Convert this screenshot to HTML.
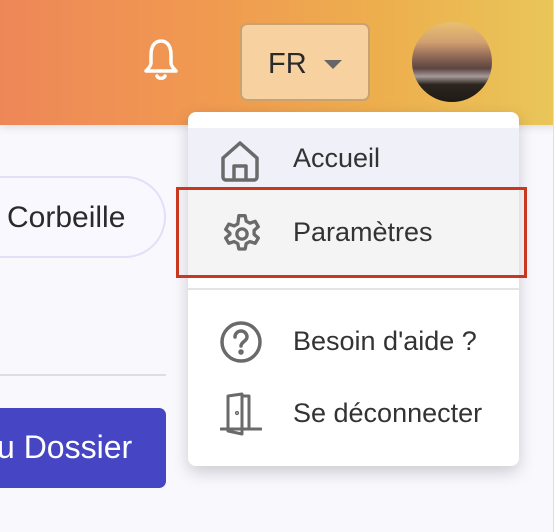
<!DOCTYPE html>
<html><head><meta charset="utf-8"><style>
*{margin:0;padding:0;box-sizing:border-box}
body{width:556px;height:532px;overflow:hidden;background:#F8F8FD;font-family:"Liberation Sans",sans-serif;position:relative}
.hdr{position:absolute;left:0;top:0;width:556px;height:125px;background:linear-gradient(90deg,#EE8758 0%,#F09B50 40%,#EDB04E 70%,#E9C65A 100%);box-shadow:0 2px 8px rgba(0,0,0,.12)}
.fr{position:absolute;left:240px;top:23px;width:130px;height:78px;background:#F7D1A0;border:2px solid #C9A272;border-radius:7px;font-size:29px;color:#2a2a2a;padding:23px 0 0 26px}
.tri{position:absolute;left:82px;top:35px;border-left:9px solid transparent;border-right:9px solid transparent;border-top:9px solid #666}
.av{position:absolute;left:412px;top:22px;width:80px;height:80px;border-radius:50%;overflow:hidden;background:linear-gradient(180deg,#E9C070 0%,#D2A070 25%,#8a6455 45%,#5a4540 58%,#a59a98 68%,#2d2620 78%,#1d1a16 100%)}
.pill{position:absolute;left:-40px;top:176px;width:206px;height:82px;border:2px solid #E2DFF8;border-radius:41px;font-size:30px;color:#2a2a2a;padding:23px 0 0 45px;background:#F8F8FE;white-space:nowrap}
.line{position:absolute;left:0;top:374px;width:166px;height:2px;background:#DDDDE2}
.btn{position:absolute;left:-20px;top:408px;width:186px;height:80px;background:#4646C4;border-radius:7px;color:#fff;font-size:32px;padding:21px 0 0 17px;white-space:nowrap}
.dd{position:absolute;left:188px;top:112px;width:331px;height:354px;background:#fff;border-radius:8px;box-shadow:0 6px 16px rgba(0,0,0,.18)}
.it{position:absolute;left:0;width:331px;font-size:27px;color:#333}
.it span{position:absolute;left:105px;white-space:nowrap}
.it svg{position:absolute;left:32px}
.red{position:absolute;left:176px;top:187px;width:351px;height:91px;border:3px solid #C8381E}
.side{position:absolute;left:553px;top:0;width:3px;height:532px;background:#fff;border-left:1px solid #ddd}
</style></head><body>
<div class="hdr">
<svg style="position:absolute;left:144px;top:38px" width="34" height="46" viewBox="0 0 34 46" fill="none" stroke="#fff" stroke-width="3.5" stroke-linejoin="round" stroke-linecap="round"><path d="M17 3C9 3 7 11 7 17v8c0 3-3 6-5 8h30c-2-2-5-5-5-8v-8c0-6-2-14-10-14z"/><path d="M13 38c1 3 7 3 8 0"/></svg>
<div class="fr">FR<div class="tri"></div></div>
<div class="av"></div>
</div>
<div class="side"></div>
<div class="pill">Corbeille</div>
<div class="line"></div>
<div class="btn">u Dossier</div>
<div class="dd">
<div class="it" style="top:16px;height:60px;background:#F0F0F8"><svg style="top:12px" width="40" height="42" viewBox="0 0 40 42" fill="none" stroke="#6a6a6a" stroke-width="3.5" stroke-linejoin="round"><path d="M3 18L20 3l17 15v19a3 3 0 01-3 3H6a3 3 0 01-3-3z"/><path d="M14 40V26h12v14"/></svg><span style="top:15px">Accueil</span></div>
<div class="it" style="top:78px;height:86px;background:#F4F4F4"><svg style="top:20px" width="44" height="48" viewBox="0 0 24 24" fill="none" stroke="#6a6a6a" stroke-width="1.8" stroke-linejoin="round"><path d="M10.3 1.5h3.4l.6 3 2 1.1 2.9-1 1.7 2.9-2.3 2v2.2l2.3 2-1.7 2.9-2.9-1-2 1.1-.6 3h-3.4l-.6-3-2-1.1-2.9 1-1.7-2.9 2.3-2V11l-2.3-2 1.7-2.9 2.9 1 2-1.1z" transform="translate(0 .5)"/><circle cx="12" cy="12" r="2.8"/></svg><span style="top:27px">Paramètres</span></div>
<div style="position:absolute;left:0;top:176px;width:331px;height:2px;background:#E4E4E4"></div>
<div class="it" style="top:208px;height:44px"><svg style="top:0" width="42" height="44" viewBox="0 0 42 44" fill="none" stroke="#6a6a6a" stroke-width="3.5" stroke-linecap="round"><circle cx="21" cy="22" r="19"/><path d="M15 17a6 6 0 1112 0c0 4-6 5-6 9"/><circle cx="21" cy="32" r="1" fill="#6a6a6a"/></svg><span style="top:6px">Besoin d'aide ?</span></div>
<div class="it" style="top:280px;height:44px"><svg style="top:0" width="42" height="44" viewBox="0 0 42 44" fill="none" stroke="#6a6a6a" stroke-width="3" stroke-linejoin="round" stroke-linecap="round"><path d="M1 37h40"/><path d="M8 37V4l14 -2v40l-14-3"/><path d="M22 4h7v33"/><circle cx="17" cy="21" r=".6" fill="#6a6a6a"/></svg><span style="top:6px">Se déconnecter</span></div>
</div>
<div class="red"></div>
</body></html>
